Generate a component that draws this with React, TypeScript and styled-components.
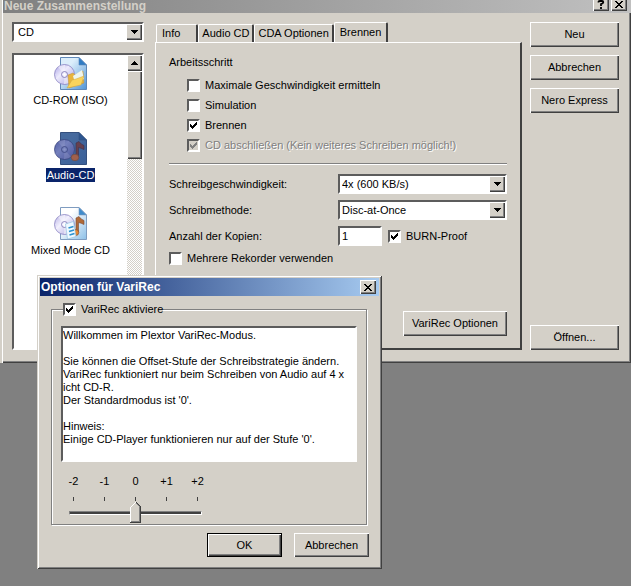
import React, { useState } from "react";
import styled, { createGlobalStyle, css } from "styled-components";

const face = "#d4d0c8";
const shadow = "#808080";
const dark = "#404040";
const navy = "#0a246a";

const svgUrl = (body: string, w: number, h: number) =>
  `url("data:image/svg+xml,${encodeURIComponent(
    `<svg xmlns='http://www.w3.org/2000/svg' width='${w}' height='${h}' viewBox='0 0 ${w} ${h}' shape-rendering='crispEdges'>${body}</svg>`
  )}")`;

const check = (color: string) =>
  svgUrl(`<path fill='${color}' d='M0 2h1v1h1v1h1v-1h1v-1h1v-1h1v-1h1v3h-1v1h-1v1h-1v1h-1v1h-1v-1h-1v-1h-1z'/>`, 7, 7);

const downArrow = svgUrl("<path fill='#000' d='M0 0h7v1h-1v1h-1v1h-1v1h-1v-1h-1v-1h-1v-1h-1z'/>", 7, 4);

const thumbShape = svgUrl(
  "<path fill='#d4d0c8' d='M0 5L5 0L11 5V21H0z'/><path fill='#fff' d='M0 5h1v-1h1v-1h1v-1h1v-1h1v-1h1v1h-1v1h-1v1h-1v1h-1v1h-1v15h-1z'/><path fill='#808080' d='M9 5h1v15h-9v-1h8zM6 1h1v1h1v1h1v1h1v1h-1v-1h-1v-1h-1v-1h-1z'/><path fill='#404040' d='M10 5h1v16H0v-1h10zM6 0h1v1h1v1h1v1h1v1h1v1h-1v-1h-1v-1h-1v-1h-1v-1h-1z'/>",
  11,
  21
);

const raised = css`
  border: 0;
  background: ${face};
  box-shadow: inset 1px 1px 0 #fff, inset -1px -1px 0 ${dark}, inset -2px -2px 0 ${shadow};
`;

const sunken = css`
  border: 2px solid;
  border-color: #5c5c5c #fff #fff #5c5c5c;
  background: #fff;
`;

const GlobalStyle = createGlobalStyle`
  *, *::before, *::after { box-sizing: border-box; }
  body { margin: 0; background: #808080; }
  body, button, input, select, textarea {
    font-family: "Liberation Sans", Arial, sans-serif;
    font-size: 11px;
    line-height: 13px;
    color: #000;
  }
`;

const Desktop = styled.div`
  position: relative;
  min-height: 100vh;
  background: #808080;
`;

const Window = styled.main`
  background: ${face};
  box-shadow: inset 2px 0 0 ${face}, inset 3px 0 0 #fff, inset -1px -1px 0 ${dark}, inset -2px -2px 0 ${shadow};
`;

const TitleBar = styled.header<{ $active?: boolean }>`
  display: flex;
  align-items: ${(p) => (p.$active ? "center" : "flex-end")};
  justify-content: space-between;
  font-weight: bold;
  height: ${(p) => (p.$active ? 18 : 13)}px;
  margin-left: ${(p) => (p.$active ? 0 : 3)}px;
  padding: ${(p) => (p.$active ? "0 3px 0 1px" : "0 4px 1px 1px")};
  color: ${(p) => (p.$active ? "#fff" : face)};
  background: ${(p) =>
    p.$active ? `linear-gradient(90deg, ${navy}, #a6caf0)` : "linear-gradient(90deg, #808080, #c0c0c0)"};
`;

const Title = styled.h1`
  margin: 0;
  font-size: 12px;
  line-height: 12px;
  white-space: nowrap;
`;

const TitleButtons = styled.div`
  display: flex;
  gap: 2px;
  margin-bottom: 1px;
`;

const TitleButton = styled.button`
  ${raised}
  display: grid;
  place-items: center;
  width: 16px;
  height: 14px;
  padding: 0;
`;

const Body = styled.div`
  display: grid;
  grid-template-columns: 132px 1fr 89px;
  padding: 9px 12px 13px;
`;

const Sidebar = styled.div`
  display: flex;
  flex-direction: column;
  gap: 11px;
`;

const Select = styled.select`
  ${sunken}
  appearance: none;
  width: 100%;
  height: 20px;
  padding: 0 20px 0 2px;
  border-radius: 0;
`;

const MediumSelect = styled(Select)`
  padding-left: 4px;
`;

const Combo = styled.div`
  display: grid;
  align-items: center;

  > * { grid-area: 1 / 1; }

  &::after {
    content: "";
    grid-area: 1 / 1;
    justify-self: end;
    width: 16px;
    height: 16px;
    margin-right: 2px;
    pointer-events: none;
    ${raised}
    background: ${face} ${downArrow} center / 7px 4px no-repeat;
  }
`;

const ListBox = styled.div`
  ${sunken}
  flex: 1;
  display: grid;
  grid-template-columns: 1fr 15px;
`;

const Items = styled.div`
  display: flex;
  flex-direction: column;
  align-items: center;
  gap: 25px;
  padding-top: 2px;
`;

const Item = styled.button<{ $selected: boolean }>`
  display: flex;
  flex-direction: column;
  align-items: center;
  gap: 3px;
  padding: 0;
  border: 0;
  background: none;
  line-height: 14px;
  white-space: nowrap;

  span {
    padding: 0 1px;
    color: ${(p) => (p.$selected ? "#fff" : "#000")};
    background: ${(p) => (p.$selected ? navy : "transparent")};
  }
`;

const ScrollBar = styled.div`
  display: flex;
  flex-direction: column;
  background: repeating-conic-gradient(#fff 0 25%, ${face} 0 50%) 0 0 / 2px 2px;
`;

const ScrollButton = styled.button`
  ${raised}
  display: grid;
  place-items: center;
  height: 16px;
  padding: 0;
`;

const ScrollThumb = styled.div`
  ${raised}
  height: 88px;
  margin-bottom: auto;
`;

const TabArea = styled.section`
  display: flex;
  flex-direction: column;
  margin: 0 8px 0 11px;
`;

const TabList = styled.div`
  display: flex;
  align-items: flex-end;
  height: 20px;
  padding-left: 1px;
`;

const Tab = styled.button<{ $active: boolean }>`
  flex: none;
  height: ${(p) => (p.$active ? 21 : 18)}px;
  margin-bottom: ${(p) => (p.$active ? -1 : 0)}px;
  padding: ${(p) => (p.$active ? "0 5px 2px" : "0 3px")};
  border: solid;
  border-width: 1px 2px 0 1px;
  border-color: #fff ${dark} #fff #fff;
  border-radius: 2px 2px 0 0;
  background: ${face};
  text-align: left;
  white-space: nowrap;

  &:first-child { padding: 0 16px 0 5px; }
`;

const Panel = styled.div`
  padding: 12px 13px 12px;
  border: solid;
  border-width: 1px 2px 2px 1px;
  border-color: #fff ${dark} ${dark} #fff;
`;

const Heading = styled.h2`
  margin: 0 0 6px;
  font-size: 11px;
  font-weight: normal;
  line-height: 14px;
`;

const CheckRow = styled.label<{ $indent?: boolean; $off?: boolean }>`
  display: flex;
  align-items: center;
  gap: 5px;
  height: 20px;
  margin-left: ${(p) => (p.$indent ? 18 : 0)}px;
  white-space: nowrap;
  color: ${(p) => (p.$off ? shadow : "#000")};
  text-shadow: ${(p) => (p.$off ? "1px 1px 0 #fff" : "none")};
`;

const CheckBox = styled.input.attrs({ type: "checkbox" })`
  ${sunken}
  appearance: none;
  flex: none;
  width: 13px;
  height: 13px;
  margin: 0;

  &:checked { background: #fff ${check("#000")} center / 7px 7px no-repeat; }
  &:disabled { background: ${face} ${check(shadow)} center / 7px 7px no-repeat; }
`;

const Rule = styled.hr`
  height: 2px;
  margin: 8px 0 9px;
  border: 0;
  border-top: 1px solid ${shadow};
  border-bottom: 1px solid #fff;
`;

const Fields = styled.div`
  display: grid;
  grid-template-columns: 1fr 1fr;
  grid-auto-rows: 20px;
  row-gap: 6px;
  align-items: center;
  margin-bottom: 2px;
`;

const Copies = styled.div`
  display: flex;
  align-items: center;
  gap: 6px;
`;

const NumberBox = styled.input`
  ${sunken}
  width: 44px;
  height: 20px;
  padding: 0 2px;
`;

const Button = styled.button<{ $default?: boolean }>`
  ${raised}
  height: 25px;
  padding: 0 9px;
  white-space: nowrap;
  ${(p) => p.$default && css`border: 1px solid #000;`}
`;

const PanelFooter = styled.div`
  display: flex;
  justify-content: flex-end;
  margin-top: 43px;
`;

const Actions = styled.div`
  display: flex;
  flex-direction: column;
  gap: 8px;

  > :last-child { margin-top: auto; }
`;

const Dialog = styled.div`
  position: absolute;
  top: 275px;
  left: 37px;
  width: 345px;
  padding: 3px 3px 12px;
  background: ${face};
  box-shadow: inset 1px 1px 0 ${face}, inset -1px -1px 0 ${dark}, inset 2px 2px 0 #fff, inset -2px -2px 0 ${shadow};
`;

const Group = styled.fieldset`
  min-width: 0;
  margin: 7px 12px 8px 11px;
  padding: 10px 9px 0 4px;
  border: 1px solid ${shadow};
  box-shadow: 1px 1px 0 #fff, inset 1px 1px 0 #fff;
`;

const Legend = styled.legend`
  margin-left: 7px;
  padding: 0;
  background: ${face};

  label { height: 13px; margin: 0; }
`;

const Message = styled.textarea`
  ${sunken}
  display: block;
  width: calc(100% - 5px);
  margin: 0 0 12px 5px;
  padding: 1px 0;
  resize: none;
  overflow: hidden;
  white-space: pre;
`;

const Scale = styled.div`
  display: grid;
  grid-template-columns: repeat(5, 31px);
  justify-items: center;
  margin-left: 2px;
  line-height: 14px;
`;

const Tick = styled.i`
  width: 1px;
  height: 4px;
  margin: 9px 0 1px;
  background: ${dark};
`;

const Slider = styled.input.attrs({ type: "range" })`
  appearance: none;
  display: block;
  width: 133px;
  height: 21px;
  margin: 0 0 1px 13px;
  background: none;

  &::-webkit-slider-runnable-track {
    height: 4px;
    border: 1px solid;
    border-color: ${shadow} #fff #fff ${shadow};
    background: ${dark};
  }

  &::-webkit-slider-thumb {
    appearance: none;
    width: 11px;
    height: 21px;
    margin-top: -10px;
    background: ${thumbShape};
  }
`;

const DialogButtons = styled.div`
  display: flex;
  justify-content: flex-end;
  gap: 12px;
  margin-right: 10px;

  button { width: 75px; height: 24px; }
`;

const CloseGlyph = () => (
  <svg width="8" height="7" viewBox="0 0 8 7" shapeRendering="crispEdges" aria-hidden="true">
    <path d="M0 0h2v1h1v1h2V1h1V0h2v1H7v1H6v1H5v1h1v1h1v1h1v1H6V6H5V5H3v1H2v1H0V6h1V5h1V4h1V3H2V2H1V1H0z" />
  </svg>
);

const HelpGlyph = () => (
  <svg width="8" height="9" viewBox="0 0 8 9" aria-hidden="true">
    <path d="M1.5 2.5V1.8Q1.5 1 3 1H5Q6.3 1 6.3 2.2Q6.3 3.2 4 4.2V6M4 7v2" fill="none" stroke="#000" strokeWidth="1.8" />
  </svg>
);

type Kind = "data" | "audio" | "mixed";

const Note = ({ light }: { light: boolean }) => (
  <g>
    <path
      d="M22 24V11l3-1.500q2 3 5 4v4q-3-1.500-5.500-2V25z"
      fill={light ? "#b06a38" : "#66404e"}
      stroke={light ? "#7a4a38" : "#40304c"}
      strokeWidth=".6"
    />
    <ellipse cx="21" cy="25.5" rx="3.8" ry="3.2" fill={light ? "#e88a34" : "#a0604c"} stroke="#70483c" strokeWidth=".6" />
  </g>
);

const palettes = {
  data: { top: "#dceefb", bottom: "#4f94d6", fold: "#2f7cc4", edge: "#5f88b8", disc: ["#a8a0e4", "#eceafc", "#a8a2e2"] },
  audio: { top: "#466a9e", bottom: "#3a5f98", fold: "#2c5590", edge: "#35507e", disc: ["#4e5aa2", "#7480bc", "#4a549c"] },
  mixed: { top: "#ffffff", bottom: "#8cc0e8", fold: "#3f8ccc", edge: "#7f9cc0", disc: ["#b4aee4", "#f2f0fd", "#aaa4de"] },
};

const DiscIcon = ({ kind }: { kind: Kind }) => {
  const c = palettes[kind];
  return (
    <svg width="33" height="33" viewBox="0 0 33 33" aria-hidden="true">
      <defs>
        <linearGradient id={`page-${kind}`} x1="0" y1="0" x2="1" y2="1">
          <stop offset="0.3" stopColor={c.top} />
          <stop offset="1" stopColor={c.bottom} />
        </linearGradient>
        <linearGradient id={`disc-${kind}`} x1="0" y1="0" x2="1" y2="1">
          <stop offset="0" stopColor={c.disc[0]} />
          <stop offset="0.4" stopColor={c.disc[1]} />
          <stop offset="1" stopColor={c.disc[2]} />
        </linearGradient>
      </defs>
      <path d="M6.5 .5H25L32.5 8V32.5H6.5z" fill={`url(#page-${kind})`} stroke={c.edge} />
      <path d="M25 .5V8h7.5z" fill={c.fold} stroke={c.edge} strokeWidth=".6" />
      <circle cx="10.5" cy="17.5" r="10" fill={`url(#disc-${kind})`} stroke={kind === "audio" ? "#39447e" : "#8880c0"} strokeWidth=".8" />
      <path
        d="M10.5 17.5L4 10A10 10 0 0 1 11 8zM10.5 17.5L17 25A10 10 0 0 1 10 27z"
        fill="#fff"
        opacity={kind === "audio" ? 0.12 : 0.45}
      />
      <circle cx="10.5" cy="17.5" r="3" fill={c.disc[1]} stroke={kind === "audio" ? "#3a447e" : "#7770b0"} strokeWidth=".8" />
      <circle cx="10.5" cy="17.5" r="1.2" fill={kind === "audio" ? "#8a94c4" : "#fff"} />
      {kind === "data" && (
        <g>
          <path d="M14 18l5-2 2 2 8-4 1 12-15 5z" fill="#e8b43c" stroke="#ba9040" strokeWidth=".5" />
          <path d="M19 19l9-6 2 9-9 4z" fill="#eef5ee" />
          <path d="M13 31l5-8 4-1 8-3-3 9z" fill="#fad45c" stroke="#cda744" strokeWidth=".5" />
        </g>
      )}
      {kind !== "data" && <Note light={kind === "mixed"} />}
      {kind === "mixed" && (
        <g>
          <path d="M11.5 17l8-2.5 2.5 15-8.500 2.5z" fill="#eff9ff" stroke="#8bbede" strokeWidth=".6" />
          <path d="M14.5 21l5-1.5M15 24.500l5-1.500M15.500 28l5-1.500" stroke="#2a92d0" strokeWidth="1.8" />
        </g>
      )}
    </svg>
  );
};

const items: { kind: Kind; label: string }[] = [
  { kind: "data", label: "CD-ROM (ISO)" },
  { kind: "audio", label: "Audio-CD" },
  { kind: "mixed", label: "Mixed Mode CD" },
];

const tabs = ["Info", "Audio CD", "CDA Optionen", "Brennen"];

const message = [
  "Willkommen im Plextor VariRec-Modus.",
  "",
  "Sie können die Offset-Stufe der Schreibstrategie ändern.",
  "VariRec funktioniert nur beim Schreiben von Audio auf 4 x",
  "icht CD-R.",
  "Der Standardmodus ist '0'.",
  "",
  "Hinweis:",
  "Einige CD-Player funktionieren nur auf der Stufe '0'.",
].join("\n");

const levels = ["-2", "-1", "0", "+1", "+2"];

export default function App() {
  const [selected, setSelected] = useState<Kind>("audio");
  const [tab, setTab] = useState("Brennen");

  return (
    <Desktop>
      <GlobalStyle />
      <Window>
        <TitleBar>
          <Title>Neue Zusammenstellung</Title>
          <TitleButtons>
            <TitleButton aria-label="Hilfe"><HelpGlyph /></TitleButton>
            <TitleButton aria-label="Schließen"><CloseGlyph /></TitleButton>
          </TitleButtons>
        </TitleBar>
        <Body>
          <Sidebar>
            <Combo>
              <MediumSelect aria-label="Medium"><option>CD</option></MediumSelect>
            </Combo>
            <ListBox>
              <Items>
                {items.map((it) => (
                  <Item key={it.kind} $selected={it.kind === selected} onClick={() => setSelected(it.kind)}>
                    <DiscIcon kind={it.kind} />
                    <span>{it.label}</span>
                  </Item>
                ))}
              </Items>
              <ScrollBar>
                <ScrollButton aria-label="Nach oben">
                  <svg width="7" height="4" viewBox="0 0 7 4" shapeRendering="crispEdges" aria-hidden="true">
                    <path d="M3 0h1v1h1v1h1v1h1v1H0V3h1V2h1V1h1z" />
                  </svg>
                </ScrollButton>
                <ScrollThumb />
              </ScrollBar>
            </ListBox>
          </Sidebar>

          <TabArea>
            <TabList role="tablist">
              {tabs.map((name) => (
                <Tab key={name} role="tab" aria-selected={name === tab} $active={name === tab} onClick={() => setTab(name)}>
                  {name}
                </Tab>
              ))}
            </TabList>
            <Panel role="tabpanel">
              <Heading>Arbeitsschritt</Heading>
              <CheckRow $indent><CheckBox />Maximale Geschwindigkeit ermitteln</CheckRow>
              <CheckRow $indent><CheckBox />Simulation</CheckRow>
              <CheckRow $indent><CheckBox defaultChecked />Brennen</CheckRow>
              <CheckRow $indent $off>
                <CheckBox defaultChecked disabled />CD abschließen (Kein weiteres Schreiben möglich!)
              </CheckRow>
              <Rule />
              <Fields>
                <label htmlFor="speed">Schreibgeschwindigkeit:</label>
                <Combo><Select id="speed"><option>4x (600 KB/s)</option></Select></Combo>
                <label htmlFor="method">Schreibmethode:</label>
                <Combo><Select id="method"><option>Disc-at-Once</option></Select></Combo>
                <label htmlFor="copies">Anzahl der Kopien:</label>
                <Copies>
                  <NumberBox id="copies" defaultValue="1" />
                  <CheckRow><CheckBox defaultChecked />BURN-Proof</CheckRow>
                </Copies>
              </Fields>
              <CheckRow><CheckBox />Mehrere Rekorder verwenden</CheckRow>
              <PanelFooter><Button>VariRec Optionen</Button></PanelFooter>
            </Panel>
          </TabArea>

          <Actions>
            <Button>Neu</Button>
            <Button>Abbrechen</Button>
            <Button>Nero Express</Button>
            <Button>Öffnen...</Button>
          </Actions>
        </Body>
      </Window>

      <Dialog role="dialog" aria-label="Optionen für VariRec">
        <TitleBar $active>
          <Title as="h2">Optionen für VariRec</Title>
          <TitleButton aria-label="Schließen"><CloseGlyph /></TitleButton>
        </TitleBar>
        <Group>
          <Legend>
            <CheckRow><CheckBox defaultChecked />VariRec aktiviere</CheckRow>
          </Legend>
          <Message aria-label="Hinweistext" readOnly rows={10} defaultValue={message} />
          <Scale>
            {levels.map((l) => <span key={l}>{l}</span>)}
            {levels.map((l) => <Tick key={l} />)}
          </Scale>
          <Slider aria-label="Stufe" min={-2} max={2} defaultValue={0} />
        </Group>
        <DialogButtons>
          <Button $default>OK</Button>
          <Button>Abbrechen</Button>
        </DialogButtons>
      </Dialog>
    </Desktop>
  );
}
